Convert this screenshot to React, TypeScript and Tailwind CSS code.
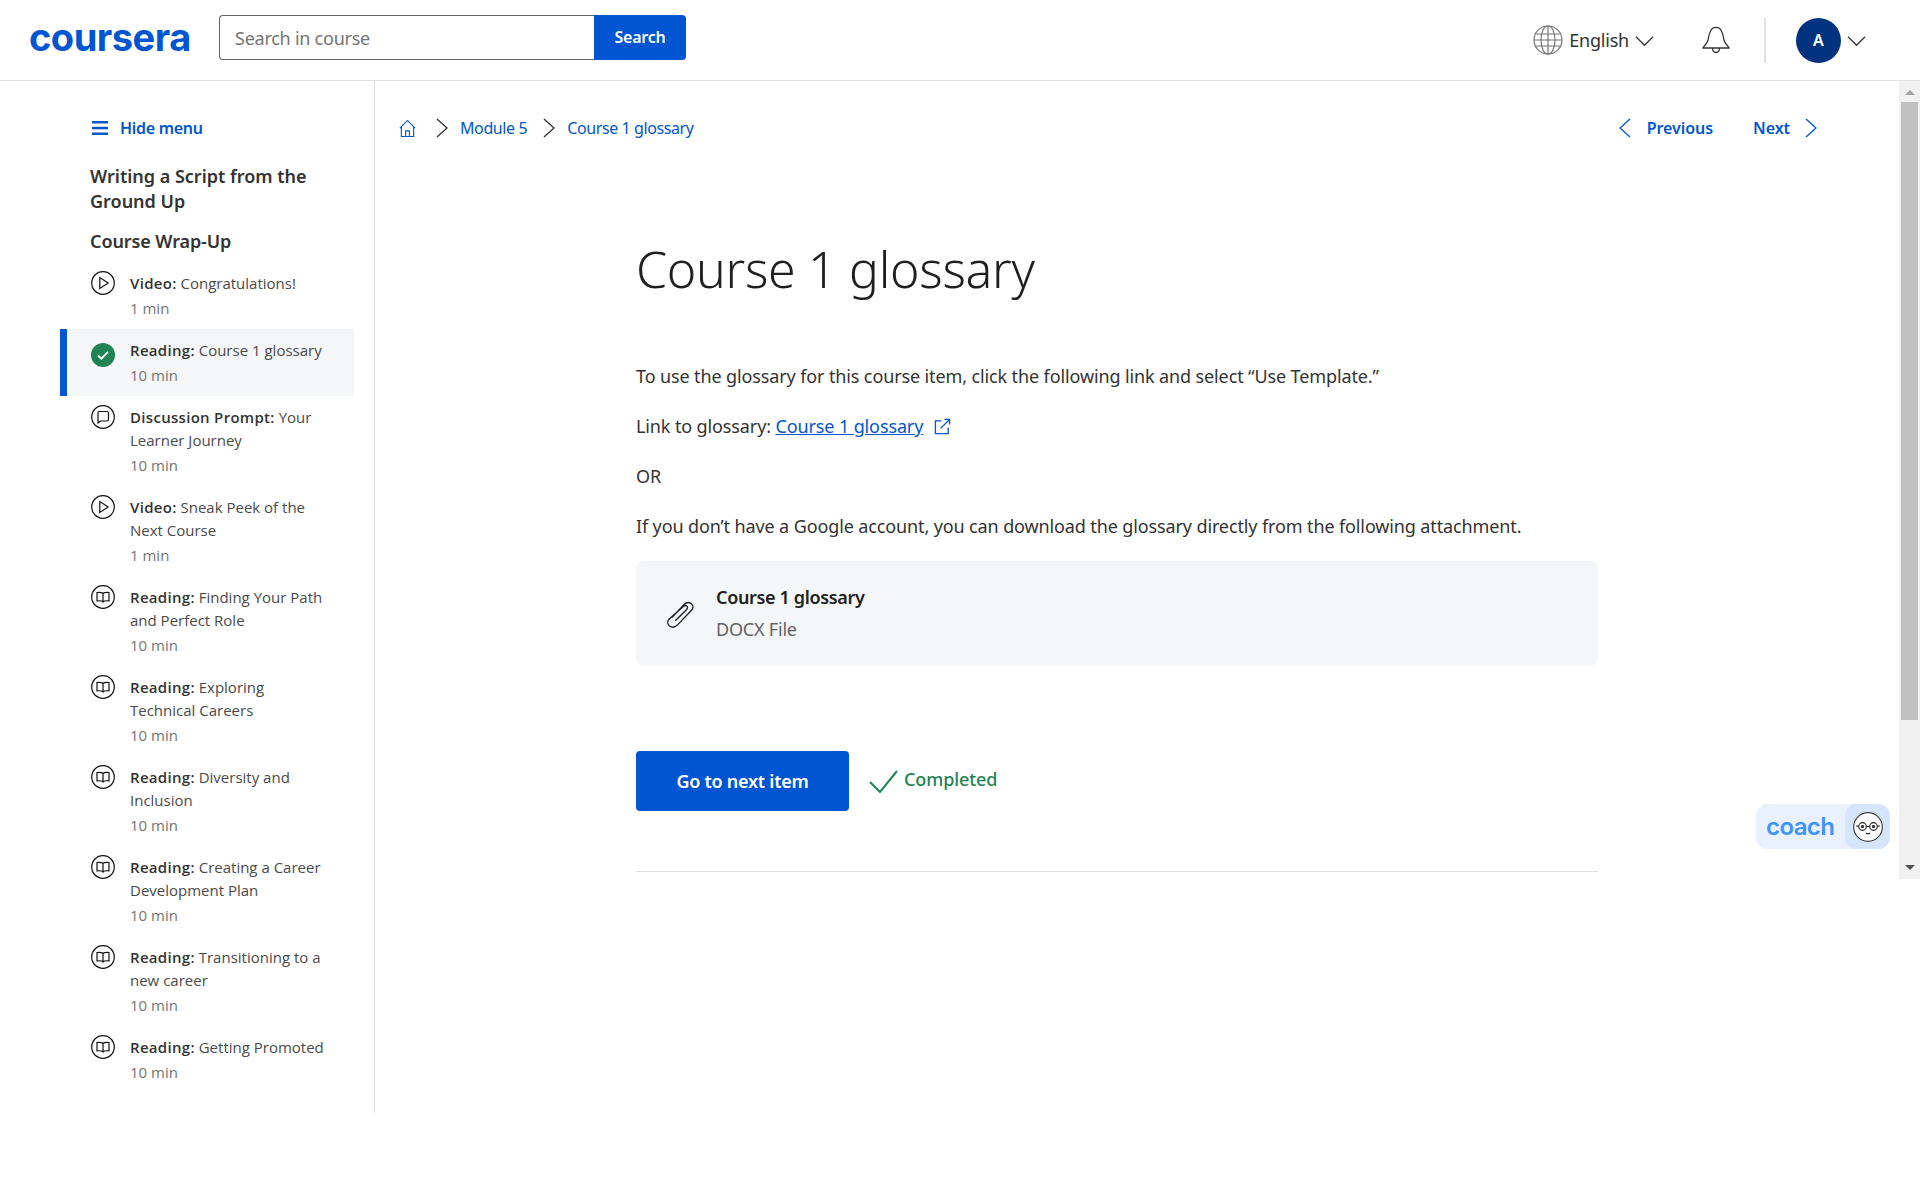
import type { ReactNode } from "react";

const items = [
  { kind: "video", label: "Video:", title: "Congratulations!", time: "1 min" },
  { kind: "done", label: "Reading:", title: "Course 1 glossary", time: "10 min" },
  { kind: "chat", label: "Discussion Prompt:", title: "Your Learner Journey", time: "10 min" },
  { kind: "video", label: "Video:", title: "Sneak Peek of the Next Course", time: "1 min" },
  { kind: "book", label: "Reading:", title: "Finding Your Path and Perfect Role", time: "10 min" },
  { kind: "book", label: "Reading:", title: "Exploring Technical Careers", time: "10 min" },
  { kind: "book", label: "Reading:", title: "Diversity and Inclusion", time: "10 min" },
  { kind: "book", label: "Reading:", title: "Creating a Career Development Plan", time: "10 min" },
  { kind: "book", label: "Reading:", title: "Transitioning to a new career", time: "10 min" },
  { kind: "book", label: "Reading:", title: "Getting Promoted", time: "10 min" },
];

function Chevron({ dir, className }: { dir: "left" | "right" | "down"; className: string }) {
  const d = dir === "left" ? "M13 1 3 10l10 9" : dir === "right" ? "M4 1l10 9-10 9" : "M1 5l9 9 9-9";
  return (
    <svg viewBox={dir === "down" ? "0 0 20 20" : "0 0 17 20"} fill="none" stroke="currentColor" strokeWidth="1.3" className={className}>
      <path d={d} />
    </svg>
  );
}

function ItemIcon({ kind }: { kind: string }) {
  if (kind === "done") {
    return (
      <svg viewBox="0 0 24 24" className="w-6 h-6 shrink-0 mt-[5px]">
        <circle cx="12" cy="12" r="12" fill="#1f8354" />
        <path d="M7 12.500l3.400 3.200L17 8.800" fill="none" stroke="#fff" strokeWidth="1.8" />
      </svg>
    );
  }
  return (
    <svg viewBox="0 0 24 24" fill="none" stroke="#111" strokeWidth="1.2" className="w-6 h-6 shrink-0">
      <circle cx="12" cy="12" r="11.300" />
      {kind === "video" && <path d="M8.800 6.500v11l8.400-5.500z" />}
      {kind === "chat" && <path d="M7 7.500a1 1 0 0 1 1-1h8a1.500 1.500 0 0 1 1.500 1.500v6.500a1.500 1.500 0 0 1-1.500 1.500H9.500L7 18z" />}
      {kind === "book" && <path d="M12 8.200C11 7.500 9 7.300 6 7.500v8.300c3-.2 5 0 6 .7 1-.7 3-.9 6-.7V7.500c-3-.2-5 0-6 .7zM12 8.200v9.600" />}
    </svg>
  );
}

function Crumb({ children }: { children: ReactNode }) {
  return <span className="text-[#0056d2] text-[16px] leading-6 tracking-[-0.4px]">{children}</span>;
}

export default function App() {
  return (
    <div className="relative h-[1181px] bg-white overflow-hidden text-[#1f1f1f] font-['Noto_Sans',sans-serif]">
      {/* HEADER */}
      <header className="h-[81px] border-b border-[#e1e1e1] flex items-start">
        <div className="w-[189px] pl-[29px] pt-[17px] text-[38px] leading-[40px] font-bold tracking-[-0.5px] text-[#0056d2] font-['Inter',sans-serif]">
          coursera
        </div>
        <div className="ml-[30px] mt-[15px] flex h-[45px]">
          <div className="w-[375px] border border-[#636363] border-r-0 rounded-l flex items-center pl-[15px] pt-0.5 text-[18px] tracking-[-0.25px] text-[#757575]">
            Search in course
          </div>
          <div className="w-[92px] bg-[#0056d2] rounded-r flex items-center justify-center text-white text-[16px] font-semibold tracking-[-0.2px] pb-0.5">
            Search
          </div>
        </div>
        <div className="ml-auto flex items-center h-[80px] pr-[54px]">
          <svg viewBox="0 0 30 30" fill="none" stroke="#757575" strokeWidth="1.2" className="w-[30px] h-[30px] mt-[-1px]">
            <circle cx="15" cy="15" r="14" />
            <ellipse cx="15" cy="15" rx="7" ry="14" />
            <path d="M15 1v28M2.500 9h25M1 15h28M2.500 21h25" />
          </svg>
          <span className="ml-[6px] text-[18px] tracking-[-0.2px] text-[#333]">English</span>
          <Chevron dir="down" className="w-[19px] h-[19px] ml-[6px] mt-[2px] text-[#333]" />
          <svg viewBox="0 0 28 30" fill="none" stroke="#333" strokeWidth="1.3" className="w-[28px] h-[30px] ml-[48px] mt-[-2px]">
            <path d="M1 24c0-2 4-3 5-8 .8-4 1.200-7 3-10 2-3.500 8-3.500 10 0 1.800 3 2.200 6 3 10 1 5 5 6 5 8z" />
            <path d="M10.500 24c0 6 7 6 7 0" />
          </svg>
          <div className="w-[2px] h-[45px] bg-[#e1e1e1] ml-[34px]" />
          <div className="w-[45px] h-[45px] ml-[30px] rounded-full bg-[#00337f] text-white flex items-center justify-center text-[16px] font-semibold">
            A
          </div>
          <Chevron dir="down" className="w-[19px] h-[19px] ml-[6px] mt-[2px] text-[#333]" />
        </div>
      </header>

      <div className="flex items-start">
        {/* SIDEBAR */}
        <aside className="w-[375px] h-[1032px] border-r border-[#e1e1e1] pl-[60px] shrink-0">
          <div className="flex items-center gap-[12px] pl-[32px] pt-[35px] text-[#0056d2]">
            <svg viewBox="0 0 16 14" fill="#0056d2" className="w-4 h-[14px]">
              <rect width="16" height="2.500" y="0" />
              <rect width="16" height="2.500" y="5.800" />
              <rect width="16" height="2.500" y="11.500" />
            </svg>
            <span className="text-[16px] leading-6 font-semibold tracking-[-0.3px]">Hide menu</span>
          </div>
          <h2 className="pl-[30px] mt-[24px] w-[290px] text-[18px] leading-[25px] font-semibold text-[#333]">
            Writing a Script from the Ground Up
          </h2>
          <h3 className="pl-[30px] mt-[15px] text-[18px] leading-[25px] font-semibold tracking-[-0.1px] text-[#333]">
            Course Wrap-Up
          </h3>
          <ul className="mt-[8px] w-[294px] font-['Open_Sans',sans-serif]">
            {items.map((item, i) => (
              <li
                key={i}
                className={
                  item.kind === "done"
                    ? "flex gap-[15px] pl-[24px] h-[67px] pt-[9px] bg-[#f5f6f8] border-l-[7px] border-[#0056d2]"
                    : item.title.length > 20 || item.label.length > 10
                      ? "flex gap-[15px] pl-[31px] h-[90px] pt-[9px]"
                      : "flex gap-[15px] pl-[31px] h-[67px] pt-[9px]"
                }
              >
                <ItemIcon kind={item.kind} />
                <div className="w-[200px] mt-px text-[15px]">
                  <p className="leading-[23px] text-[#4a4a4a]">
                    <span className="font-semibold tracking-[0.3px] text-[#333]">{item.label}</span> {item.title}
                  </p>
                  <p className="leading-[25px] mt-px text-[#757575]">{item.time}</p>
                </div>
              </li>
            ))}
          </ul>
        </aside>

        {/* MAIN */}
        <main className="flex-1 min-w-0">
          <nav className="flex items-center pl-[24px] pr-[80px] pt-[35px] h-[24px] box-content">
            <svg viewBox="0 0 18 20" fill="none" stroke="#0056d2" strokeWidth="1.2" className="w-[17px] h-[19px]">
              <path d="M1 9.500 9 1.500l8 8M2.500 8.500V18.500h13V8.500M7 18.500v-6h4v6" />
            </svg>
            <Chevron dir="right" className="w-[17px] h-[20px] ml-[17px] text-[#333]" />
            <span className="ml-[10px]"><Crumb>Module 5</Crumb></span>
            <Chevron dir="right" className="w-[17px] h-[20px] ml-[13px] text-[#333]" />
            <span className="ml-[10px]"><Crumb>Course 1 glossary</Crumb></span>
            <div className="ml-auto flex items-center text-[#0056d2] text-[16px] font-semibold tracking-[-0.05px]">
              <Chevron dir="left" className="w-[17px] h-[20px]" />
              <span className="ml-[13px]">Previous</span>
              <span className="ml-[40px]">Next</span>
              <Chevron dir="right" className="w-[17px] h-[20px] ml-[12px]" />
            </div>
          </nav>

          <article className="ml-[261px] w-[962px] pt-[98px]">
            <h1 className="text-[50px] leading-[62px] font-light tracking-[-0.3px] text-[#1f1f1f]">Course 1 glossary</h1>
            <div className="mt-[63px] text-[18px] leading-[26px] tracking-[-0.12px] text-[#333] flex flex-col gap-6">
              <p>To use the glossary for this course item, click the following link and select “Use Template.”</p>
              <p className="flex items-center">
                Link to glossary:&nbsp;
                <a className="text-[#0056d2] underline">Course 1 glossary</a>
                <svg viewBox="0 0 18 18" fill="none" stroke="#0056d2" strokeWidth="1.4" className="w-[17px] h-[17px] ml-[11px]">
                  <path d="M8 3H1.500v13.500H15V10M7 11 16.500 1.500M11 1.500h5.500V7" />
                </svg>
              </p>
              <p>OR</p>
              <p>If you don’t have a Google account, you can download the glossary directly from the following attachment.</p>
            </div>
            <div className="mt-[22px] h-[105px] rounded-lg bg-[#f5f6f8] flex items-center pl-[29px] gap-[19px]">
              <svg viewBox="0 0 28 28" fill="none" stroke="#1f1f1f" strokeWidth="1.2" className="w-[32px] h-[32px]">
                <path d="M6 17 17 5.500c2-2 4-2 6-.5s2 4 0 6L11 23.500c-2.500 2.500-5 2.500-7 1s-2-4-.5-6L16 7.500c1-1 2.200-1 3-.5s1 2 0 3L9 20" />
              </svg>
              <div className="pb-0.5">
                <p className="text-[18px] leading-[32px] font-semibold tracking-[-0.35px] text-[#1f1f1f]">Course 1 glossary</p>
                <p className="text-[18px] leading-[32px] tracking-[-0.2px] text-[#636363]">DOCX File</p>
              </div>
            </div>
            <div className="mt-[85px] flex items-start">
              <button className="w-[213px] h-[60px] rounded bg-[#0056d2] text-white text-[18px] font-semibold tracking-[-0.25px]">
                Go to next item
              </button>
              <svg viewBox="0 0 29 23" fill="none" stroke="#1f8354" strokeWidth="2" className="w-[29px] h-[23px] ml-[20px] mt-[19px]">
                <path d="M1 12l10 10L28 1" />
              </svg>
              <span className="ml-[6px] mt-[15px] text-[18px] leading-[26px] font-medium tracking-[-0.1px] text-[#1f8354]">Completed</span>
            </div>
            <div className="mt-[60px] border-t border-[#e1e1e1]" />
          </article>
        </main>

        {/* SCROLLBAR */}
        <div className="w-[21px] h-[798px] bg-[#f1f1f1] shrink-0 flex flex-col items-center">
          <div className="mt-[9px] w-0 h-0 border-x-[5px] border-x-transparent border-b-[5px] border-b-[#a3a3a3]" />
          <div className="mt-[7px] w-[17px] h-[618px] bg-[#c1c1c1]" />
          <div className="mt-auto mb-[9px] w-0 h-0 border-x-[5px] border-x-transparent border-t-[5px] border-t-[#505050]" />
        </div>
      </div>

      {/* COACH */}
      <div className="absolute left-[1756px] top-[804px] w-[134px] h-[45px] rounded-xl bg-[#e8f1fd] flex items-center overflow-hidden">
        <span className="pl-[10px] w-[89px] text-[24px] font-semibold text-[#3d94ff] font-['Inter',sans-serif] tracking-[-0.6px]">coach</span>
        <div className="w-[45px] h-[45px] bg-[#d5e5fc] rounded-l-xl flex items-center justify-center">
          <svg viewBox="0 0 30 30" className="w-[30px] h-[30px]" fill="none" stroke="#222" strokeWidth="1.2">
            <circle cx="15" cy="15" r="14.300" fill="#fff" stroke="#444" />
            <circle cx="9.500" cy="14.500" r="3.800" />
            <circle cx="20.500" cy="14.500" r="3.800" />
            <path d="M13.300 14.500h3.400M5.700 14H3M24.300 14H27M13 21c1 1 3 1 4 0" />
            <circle cx="9.500" cy="14.500" r="1" fill="#222" />
            <circle cx="20.500" cy="14.500" r="1" fill="#222" />
          </svg>
        </div>
      </div>
    </div>
  );
}
